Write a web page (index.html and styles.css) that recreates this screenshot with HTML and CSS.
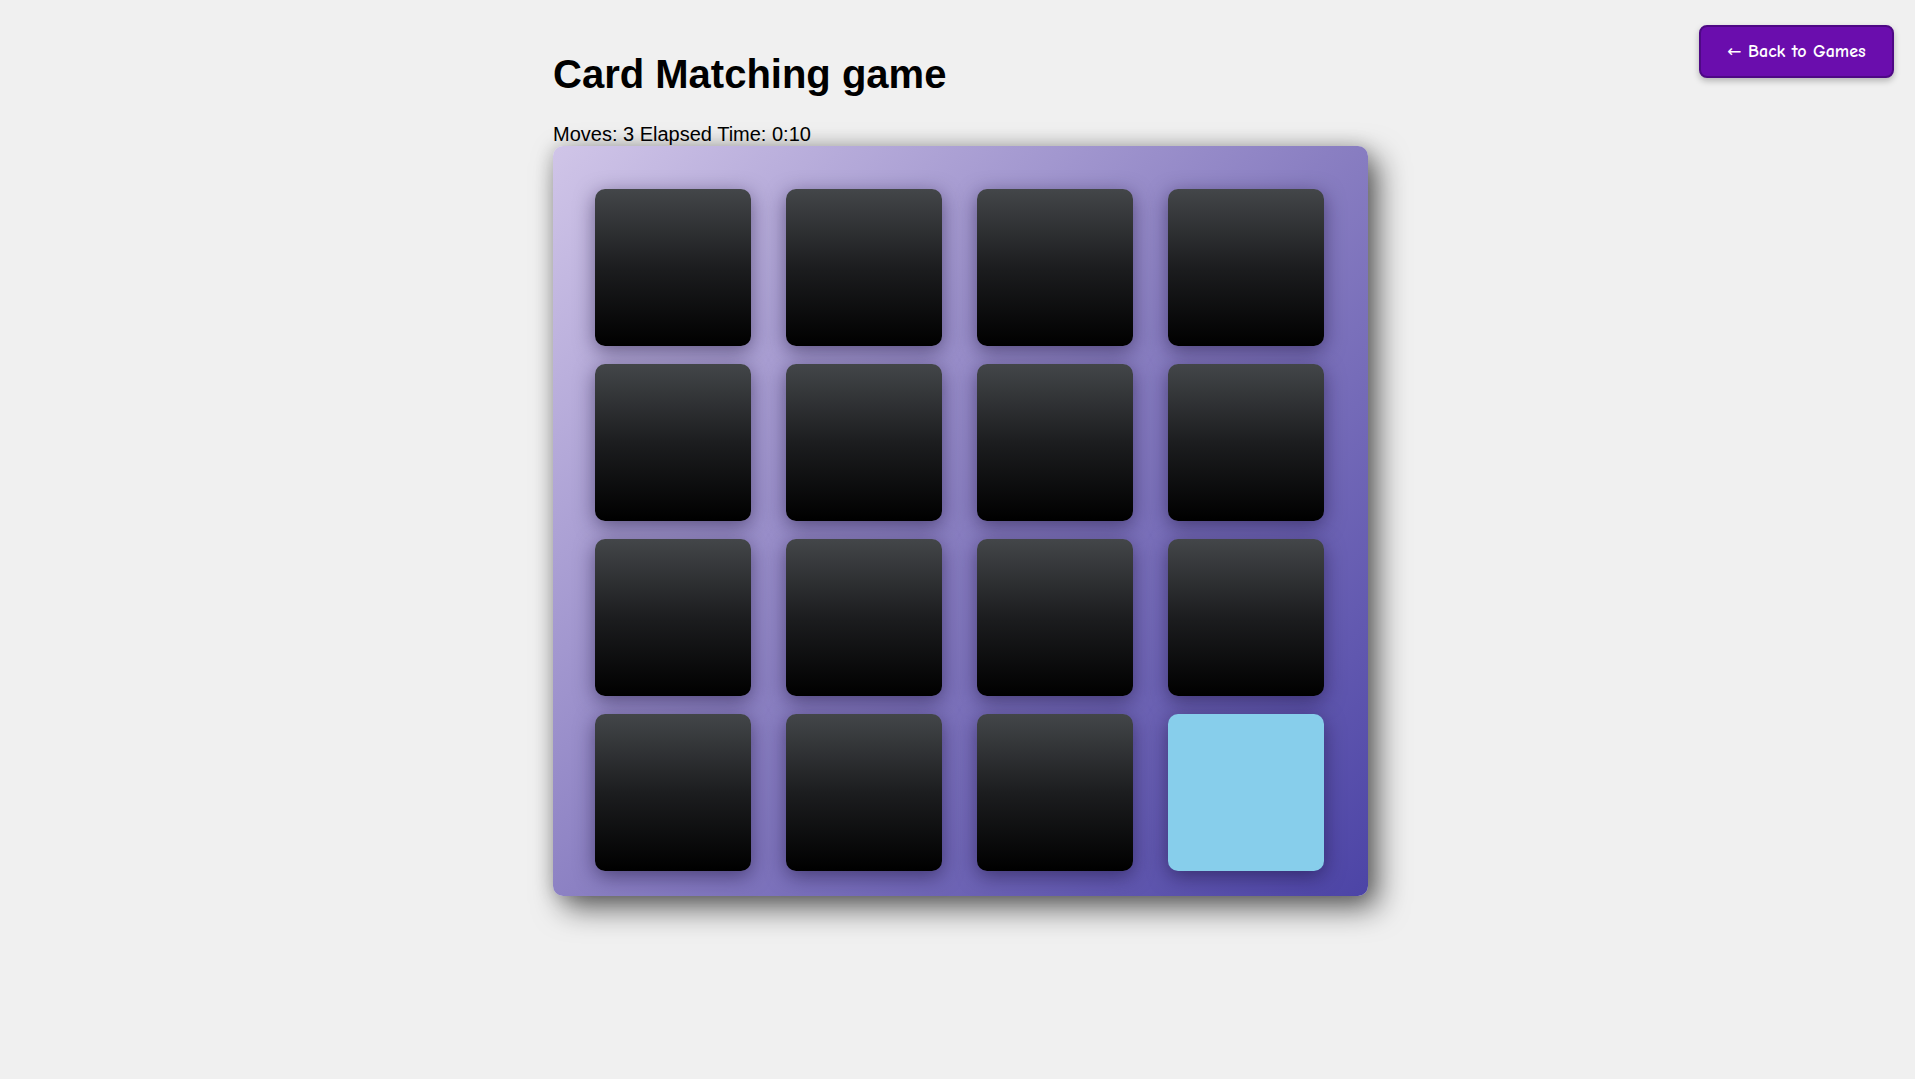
FILE: index.html
```html
<!DOCTYPE html>
<html lang="en">
<head>
<meta charset="utf-8">
<title>Card Matching game</title>
<link rel="stylesheet" href="styles.css">
</head>
<body>
<button class="back-btn"><span class="arrow">←</span> Back to Games</button>
<main class="game">
  <h1 class="title">Card Matching game</h1>
  <div class="stats">Moves: 3 Elapsed Time: 0:10</div>
  <div class="board">
    <div class="card"></div>
    <div class="card"></div>
    <div class="card"></div>
    <div class="card"></div>
    <div class="card"></div>
    <div class="card"></div>
    <div class="card"></div>
    <div class="card"></div>
    <div class="card"></div>
    <div class="card"></div>
    <div class="card"></div>
    <div class="card"></div>
    <div class="card"></div>
    <div class="card"></div>
    <div class="card"></div>
    <div class="card card-flipped"></div>
  </div>
</main>
</body>
</html>
```
FILE: styles.css
```css
html, body {
  margin: 0;
  padding: 0;
}
body {
  background: #f0f0f0;
  font-family: "Liberation Sans", Arial, sans-serif;
  color: #000;
  min-height: 1079px;
  position: relative;
}
.game {
  width: 815px;
  margin: 0 auto;
  padding: 51px 0 0 6px;
  display: flex;
  flex-direction: column;
}
.title {
  margin: 0;
  font-size: 40px;
  line-height: 46px;
  font-weight: bold;
}
.stats {
  margin-top: 26px;
  font-size: 20px;
  line-height: 23px;
}
.board {
  display: grid;
  grid-template-columns: repeat(4, 156px);
  grid-auto-rows: 157px;
  column-gap: 35px;
  row-gap: 18px;
  padding: 43px 43px 25px 42px;
  border-radius: 10px;
  background: linear-gradient(135deg, #d0c5e8 0%, #8a7fc2 50%, #4c44a6 100%);
  box-shadow: 10px 12px 30px rgba(0, 0, 0, 0.6), 0 0 18px rgba(0, 0, 0, 0.18);
}
.card {
  border-radius: 10px;
  background: linear-gradient(to bottom, #434649 0%, #1c1d1f 50%, #000 100%);
  box-shadow: 0 5px 20px rgba(20, 10, 50, 0.5);
}
.card-flipped {
  background: #87ceeb;
}
.back-btn {
  position: absolute;
  top: 25px;
  right: 21px;
  width: 195px;
  height: 53px;
  background: #6a0dad;
  color: #fff;
  border: 2px solid #4e0885;
  border-radius: 8px;
  font-family: "Comic Sans MS", "Comic Neue", cursive;
  font-weight: bold;
  font-size: 18px;
  box-shadow: 0 3px 6px rgba(0, 0, 0, 0.25);
  cursor: pointer;
}
.arrow {
  font-family: "DejaVu Sans", sans-serif;
  font-weight: normal;
  font-size: 17px;
}
```
